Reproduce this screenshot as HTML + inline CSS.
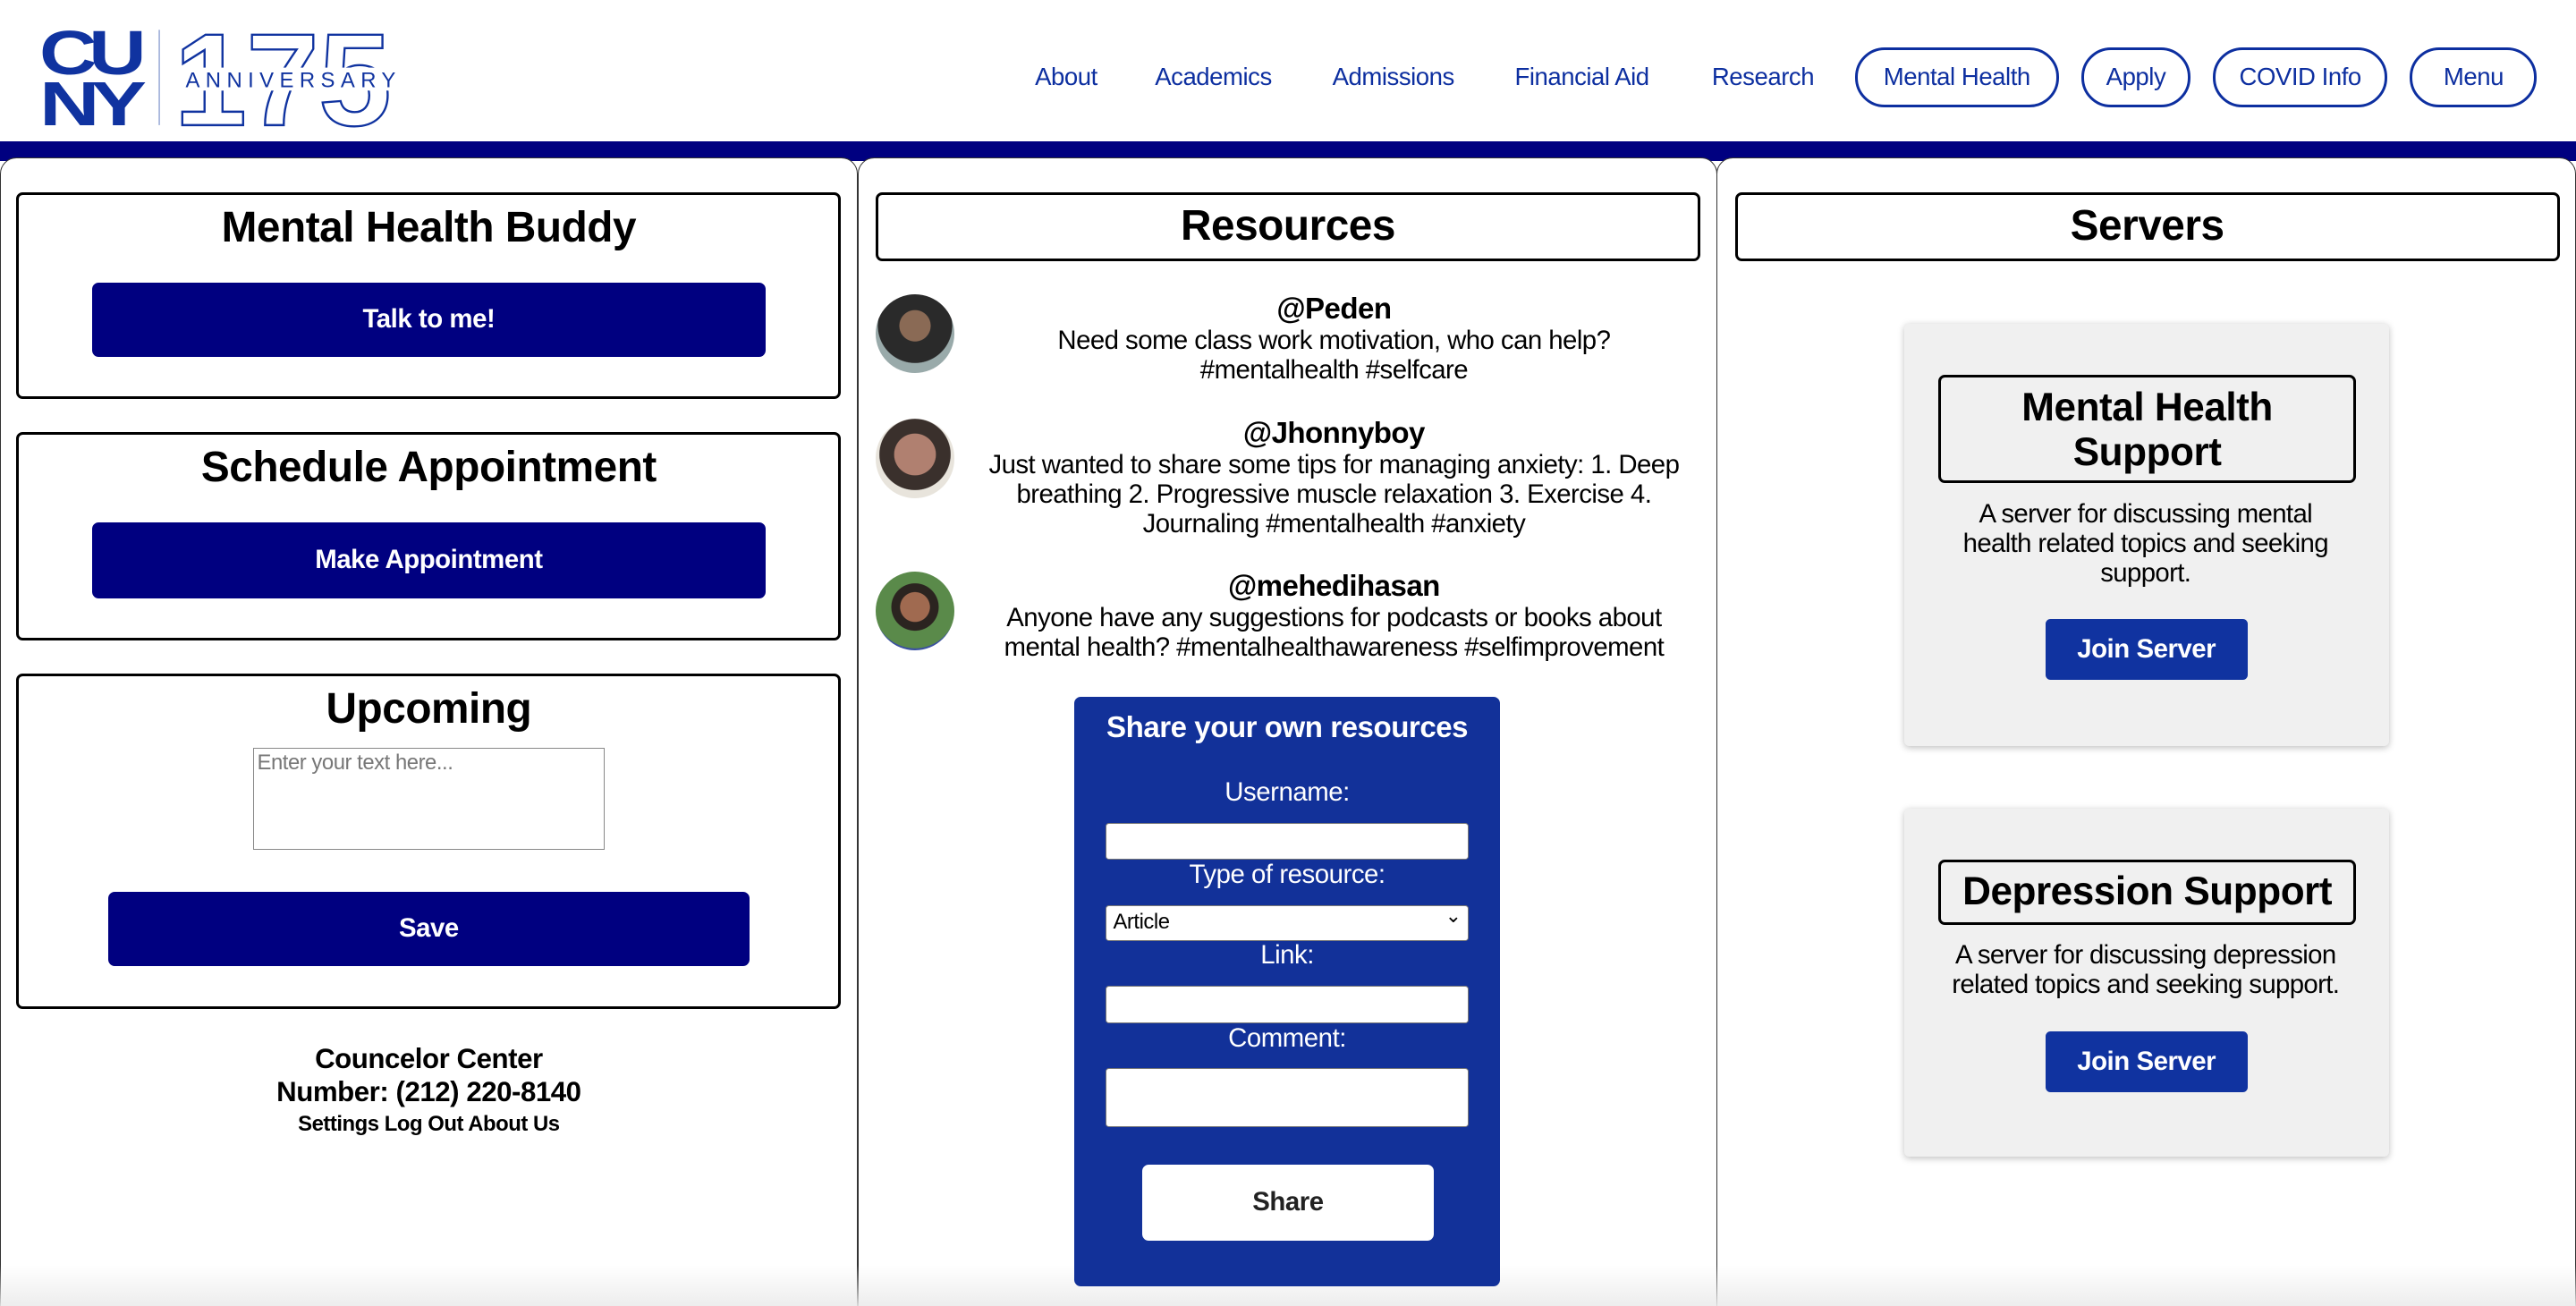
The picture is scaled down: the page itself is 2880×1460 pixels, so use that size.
<!DOCTYPE html>
<html><head><meta charset="utf-8"><style>
html,body{margin:0;padding:0;width:2880px;height:1460px;overflow:hidden;background:#fff}
#w{zoom:1.83673;width:1568px;height:795px;position:relative;font-family:"Liberation Sans",Arial,sans-serif;color:#000;letter-spacing:-0.25px}
.a{position:absolute}
.nav{position:absolute;top:38px;font-size:15px;color:#0d2fa0}
.pill{position:absolute;top:29px;height:33px;border:2px solid #0d2fa0;border-radius:18px;color:#0d2fa0;font-size:15px;line-height:33px;text-align:center;box-sizing:content-box}
.col{position:absolute;top:96px;height:720px;background:#fff;border:1px solid #333;border-radius:10px 10px 0 0}
.box{position:absolute;border:2px solid #000;border-radius:4px;box-sizing:border-box;text-align:center}
.t{font-weight:bold;font-size:26px}
.btn{position:absolute;background:#000080;color:#fff;font-weight:bold;font-size:16px;border-radius:4px;text-align:center}
.post{position:absolute;left:590px;width:444px;text-align:center;font-size:16px;line-height:18px;letter-spacing:-0.3px}
.post b{font-size:18px;display:block;line-height:19px}
.av{position:absolute;left:533px;width:48px;height:48px;border-radius:50%}
.lab{position:absolute;left:654px;width:259px;text-align:center;color:#fff;font-size:16px}
.inp{position:absolute;left:673px;width:221px;background:#fff;border:1px solid #777;border-radius:2px;box-sizing:border-box}
.card{position:absolute;left:1159px;width:295px;background:#f0f0f0;box-shadow:0 1px 4px rgba(0,0,0,.25);border-radius:3px}
.jb{position:absolute;left:1245px;width:123px;height:37px;background:#1033a0;color:#fff;font-weight:bold;font-size:16px;line-height:37px;text-align:center;border-radius:3px}
.desc{position:absolute;left:1181px;width:250px;text-align:center;font-size:16px;line-height:18px;letter-spacing:-0.35px}
</style></head><body><div id="w">
<svg class="a" style="left:24px;top:14px" width="220" height="64" viewBox="0 0 220 64">
<text x="0" y="31" font-family="Liberation Sans" font-weight="bold" font-size="38" fill="#1033a0" letter-spacing="-4" textLength="60" lengthAdjust="spacingAndGlyphs">CU</text>
<text x="0" y="62" font-family="Liberation Sans" font-weight="bold" font-size="38" fill="#1033a0" letter-spacing="-4" textLength="60" lengthAdjust="spacingAndGlyphs">NY</text>
<line x1="73" y1="4" x2="73" y2="62" stroke="#aab8dd" stroke-width="1"/>
<text x="82" y="62" font-family="Liberation Sans" font-weight="bold" font-size="80" fill="none" stroke="#1033a0" stroke-width="1.3" textLength="132" lengthAdjust="spacingAndGlyphs">175</text>
<rect x="86" y="27" width="130" height="14" fill="#fff"/>
<text x="89" y="39" font-family="Liberation Sans" font-size="13" fill="#1033a0" letter-spacing="3.5">ANNIVERSARY</text>
</svg>
<div class="nav" style="left:630px">About</div>
<div class="nav" style="left:703px">Academics</div>
<div class="nav" style="left:811px">Admissions</div>
<div class="nav" style="left:922px">Financial Aid</div>
<div class="nav" style="left:1042px">Research</div>
<div class="pill" style="left:1129px;width:121px">Mental Health</div>
<div class="pill" style="left:1267px;width:63px">Apply</div>
<div class="pill" style="left:1347px;width:103px">COVID Info</div>
<div class="pill" style="left:1467px;width:74px">Menu</div>
<div class="a" style="left:0;top:86px;width:1568px;height:12px;background:#000080"></div>
<div class="col" style="left:0;width:521px"></div>
<div class="col" style="left:522px;width:522px"></div>
<div class="col" style="left:1045px;width:522px"></div>
<div class="a" style="left:0;top:770px;width:1568px;height:25px;background:linear-gradient(rgba(240,240,240,0),rgba(235,235,235,.9))"></div>

<div class="box" style="left:10px;top:117px;width:502px;height:126px"><div class="t" style="margin-top:5px">Mental Health Buddy</div></div>
<div class="btn" style="left:56px;top:172px;width:410px;height:45px;line-height:45px">Talk to me!</div>
<div class="box" style="left:10px;top:263px;width:502px;height:127px"><div class="t" style="margin-top:5px">Schedule Appointment</div></div>
<div class="btn" style="left:56px;top:318px;width:410px;height:46px;line-height:46px">Make Appointment</div>
<div class="box" style="left:10px;top:410px;width:502px;height:204px"><div class="t" style="margin-top:5px">Upcoming</div></div>
<div class="a" style="left:154px;top:455px;width:214px;height:62px;border:1px solid #888;box-sizing:border-box;font-size:13px;color:#777;padding:1px 2px">Enter your text here...</div>
<div class="btn" style="left:66px;top:543px;width:390px;height:45px;line-height:45px">Save</div>
<div class="a" style="left:0;width:522px;top:635px;text-align:center;font-weight:bold;font-size:17px;line-height:20px">Councelor Center<br>Number: (212) 220-8140</div>
<div class="a" style="left:0;width:522px;top:677px;text-align:center;font-weight:bold;font-size:13px">Settings Log Out About Us</div>

<div class="box" style="left:533px;top:117px;width:502px;height:42px"><div class="t" style="line-height:38px">Resources</div></div>
<div class="av" style="top:179px;background:radial-gradient(circle at 50% 40%,#8a6a55 0 25%,#2a2a2a 26% 60%,#9aa 61%)"></div>
<div class="post" style="top:179px"><b>@Peden</b>Need some class work motivation, who can help?<br>#mentalhealth #selfcare</div>
<div class="av" style="top:255px;background:radial-gradient(circle at 50% 45%,#b08070 0 35%,#3a302c 36% 60%,#e8e4dc 61%)"></div>
<div class="post" style="top:255px"><b>@Jhonnyboy</b>Just wanted to share some tips for managing anxiety: 1. Deep breathing 2. Progressive muscle relaxation 3. Exercise 4. Journaling #mentalhealth #anxiety</div>
<div class="av" style="top:348px;background:radial-gradient(circle at 50% 45%,#a06a50 0 25%,#2b2420 26% 40%,#5a8a4a 41% 70%,#3a50a0 71%)"></div>
<div class="post" style="top:348px"><b>@mehedihasan</b>Anyone have any suggestions for podcasts or books about mental health? #mentalhealthawareness #selfimprovement</div>

<div class="a" style="left:654px;top:424px;width:259px;height:359px;background:#123199;border-radius:4px"></div>
<div class="lab" style="top:433px;font-weight:bold;font-size:18px">Share your own resources</div>
<div class="lab" style="top:473px">Username:</div>
<div class="inp" style="top:501px;height:22px"></div>
<div class="lab" style="top:523px">Type of resource:</div>
<div class="inp" style="top:551px;height:22px;font-size:13px;padding:2px 4px">Article<span style="position:absolute;right:4px;top:-1px;font-size:12px">&#8964;</span></div>
<div class="lab" style="top:572px">Link:</div>
<div class="inp" style="top:600px;height:23px"></div>
<div class="lab" style="top:623px">Comment:</div>
<div class="inp" style="top:650px;height:36px"></div>
<div class="a" style="left:695px;top:709px;width:178px;height:46px;background:#fff;border-radius:4px;text-align:center;line-height:46px;font-weight:bold;font-size:16px;color:#222">Share</div>

<div class="box" style="left:1056px;top:117px;width:502px;height:42px"><div class="t" style="line-height:38px">Servers</div></div>
<div class="card" style="top:197px;height:257px"></div>
<div class="box" style="left:1180px;top:228px;width:254px;height:66px"><div style="font-weight:bold;font-size:24px;line-height:27px;margin-top:5px">Mental Health<br>Support</div></div>
<div class="desc" style="top:304px;left:1186px;width:240px">A server for discussing mental health related topics and seeking support.</div>
<div class="jb" style="top:377px">Join Server</div>
<div class="card" style="top:492px;height:212px"></div>
<div class="box" style="left:1180px;top:523px;width:254px;height:40px"><div style="font-weight:bold;font-size:24px;line-height:36px">Depression Support</div></div>
<div class="desc" style="top:572px">A server for discussing depression related topics and seeking support.</div>
<div class="jb" style="top:628px">Join Server</div>
</div></body></html>
